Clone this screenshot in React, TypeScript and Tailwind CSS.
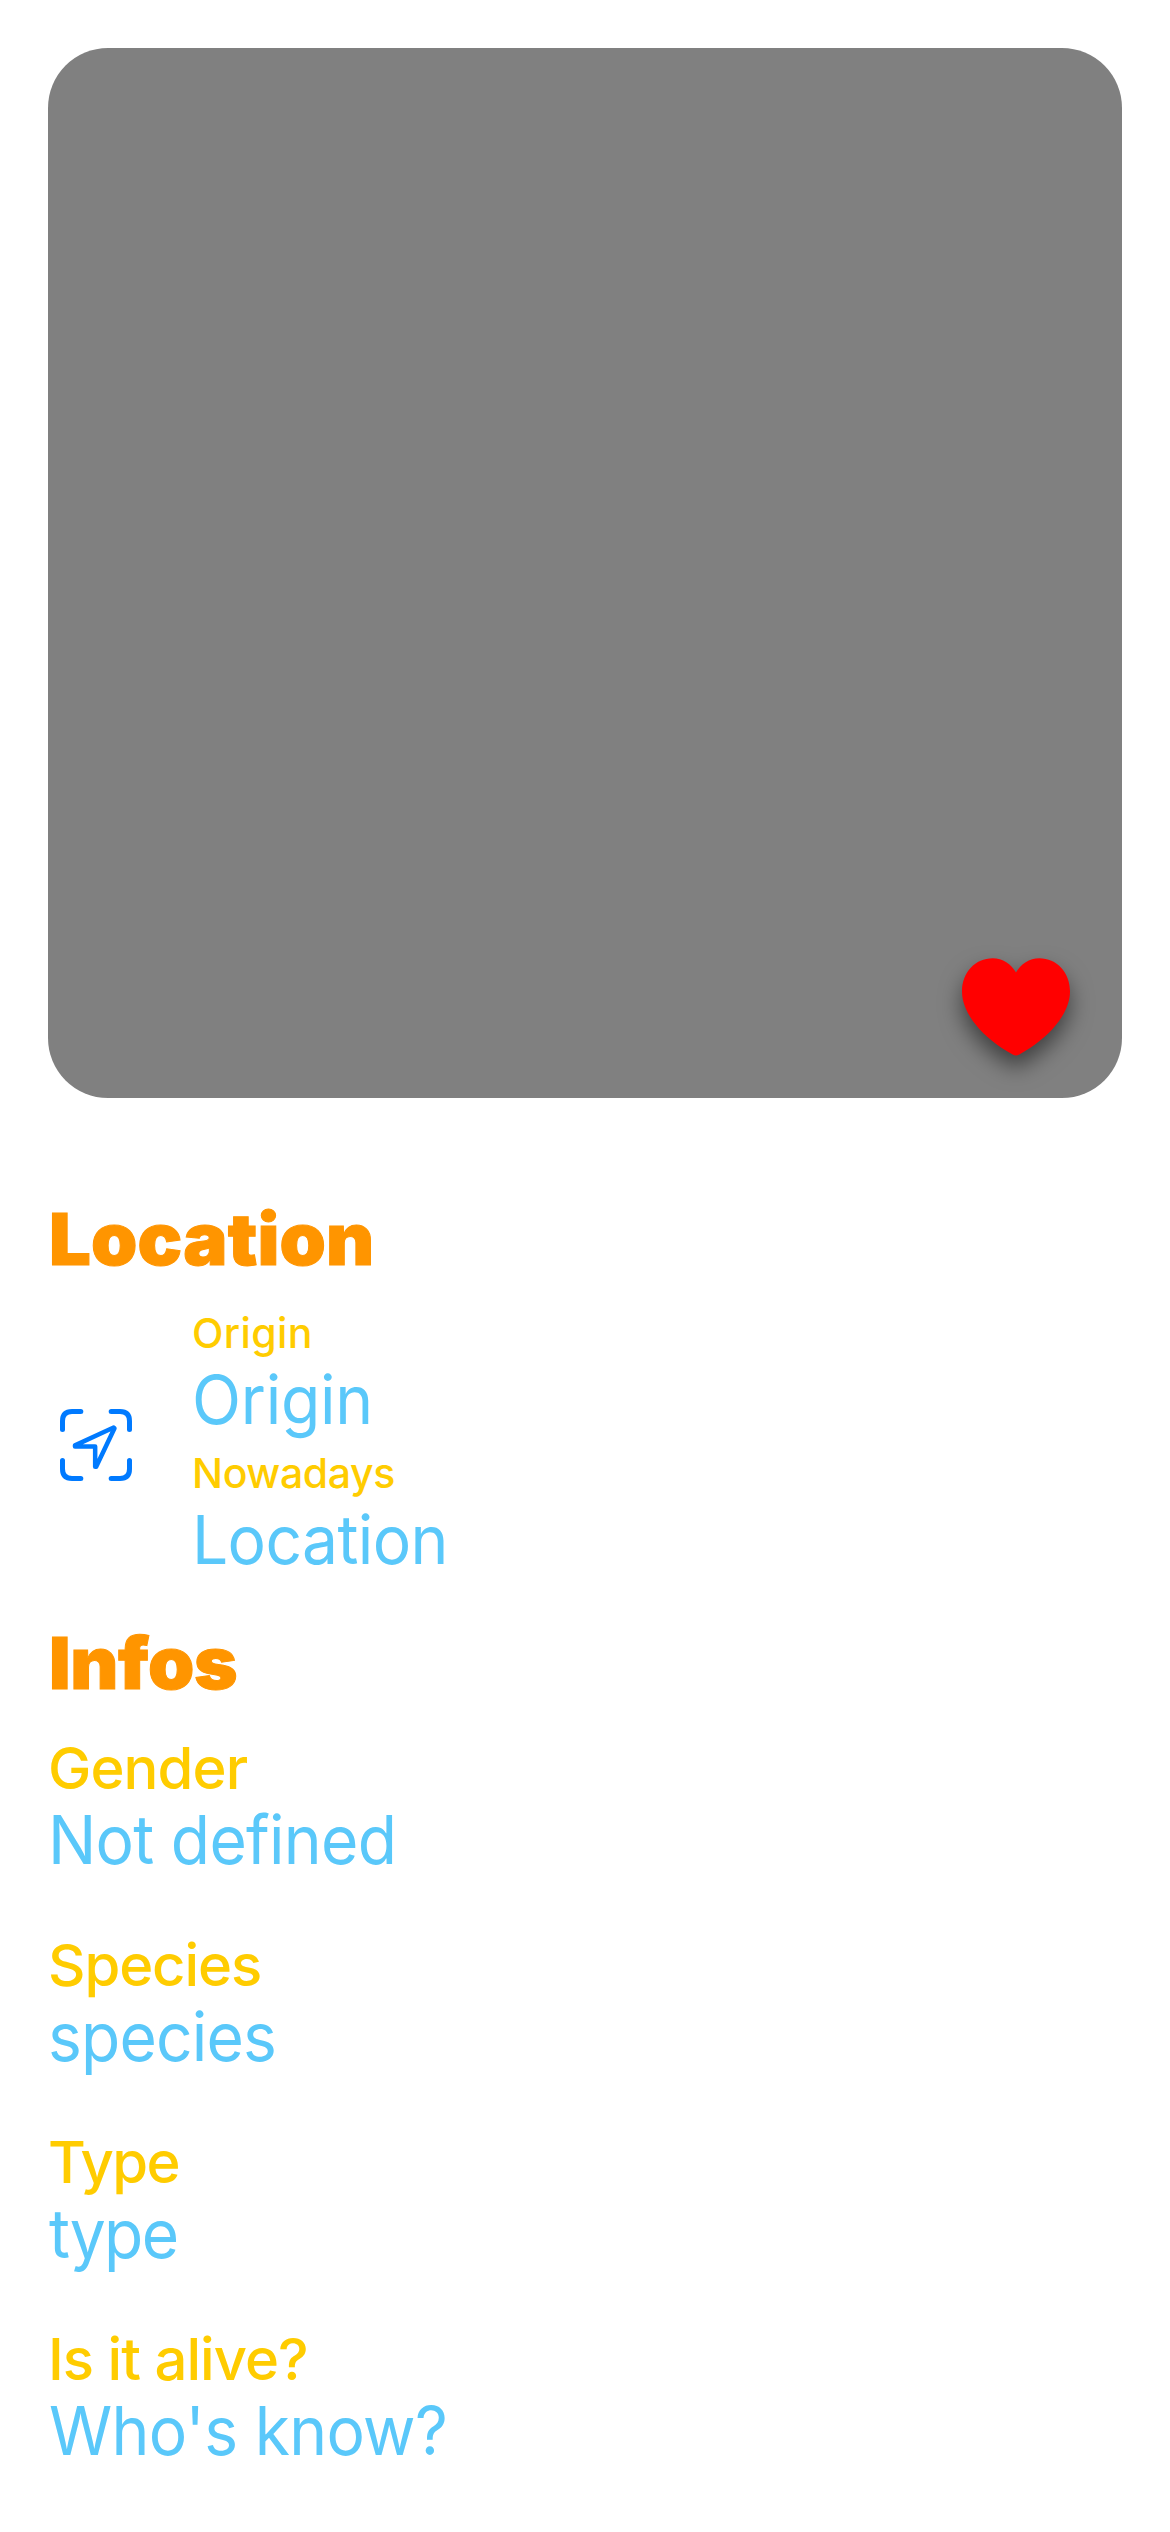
function Heart() {
  return (
    <svg
      viewBox="0 0 324 293"
      className="h-[98px] w-[108px] overflow-visible drop-shadow-[0_12px_11px_rgba(0,0,0,0.5)]"
      fill="#ff0000"
      aria-label="Favourite"
    >
      <path d="M162 43C148 17 122 0 92 0C40 0 0 42 0 100C0 166 62 240 152 289Q162 295 172 289C262 240 324 166 324 100C324 42 284 0 232 0C202 0 176 17 162 43Z" />
    </svg>
  );
}

function LocationViewfinder() {
  return (
    <svg
      viewBox="0 0 216 216"
      className="size-[72px]"
      fill="none"
      stroke="#007aff"
      strokeLinecap="round"
      strokeLinejoin="round"
    >
      <path
        strokeWidth="15"
        d="M7.5 61.5V36Q7.5 7.5 36 7.5H62.5M153.5 7.5H180Q208.5 7.5 208.5 36V61.5M208.5 154.5V180Q208.5 208.5 180 208.5H153.5M62.5 208.5H36Q7.5 208.5 7.5 180V154.5"
      />
      <path strokeWidth="13.5" d="M161 55.5L45 109V112.5H105.5V173.5H108.5L163.5 58Z" />
    </svg>
  );
}

const title =
  "ml-px origin-left scale-x-[1.03] text-[72px] leading-[86px] font-black text-[#ff9500] [-webkit-text-stroke:1px_#ff9500]";
const caption = "text-[41px] leading-[50px] font-medium text-[#ffcc00]";
const label = "text-[58px] leading-[59px] font-medium text-[#ffcc00]";
const value = "origin-left scale-x-95 text-[67.5px] leading-[84px] font-normal text-[#5ac8fa]";

const infos = [
  { name: "Gender", nameClass: "tracking-[-0.91px]", text: "Not defined", textClass: "tracking-[-0.77px]" },
  { name: "Species", nameClass: "tracking-[-1.09px]", text: "species", textClass: "tracking-[-0.87px]" },
  { name: "Type", nameClass: "tracking-[-1.68px]", text: "type", textClass: "ml-px tracking-[-1.66px]" },
  { name: "Is it alive?", nameClass: "tracking-[-0.98px]", text: "Who's know?", textClass: "ml-px tracking-[-0.7px]" },
];

export default function App() {
  return (
    <main className="flex h-[2532px] w-[1170px] flex-col overflow-hidden bg-white px-12 pt-12 font-['Inter',sans-serif] whitespace-nowrap">
      <div className="flex h-[1050px] shrink-0 items-end justify-end rounded-[60px] bg-[#808080] pr-[52px] pb-[42px]">
        <Heart />
      </div>

      <section className="mt-[98px]">
        <h2 className={`${title} tracking-[0.16px]`}>Location</h2>
        <div className="mt-[26px] flex items-center gap-12">
          <div className="flex w-24 justify-center">
            <LocationViewfinder />
          </div>
          <div className="flex flex-col gap-1.5">
            <div>
              <p className={`${caption} tracking-[0.37px]`}>Origin</p>
              <p className={`${value} tracking-[-0.26px]`}>Origin</p>
            </div>
            <div>
              <p className={`${caption} tracking-[-0.37px]`}>Nowadays</p>
              <p className={`${value} tracking-[-0.67px]`}>Location</p>
            </div>
          </div>
        </div>
      </section>

      <section className="mt-[38px]">
        <h2 className={`${title} tracking-[-0.3px]`}>Infos</h2>
        <div className="mt-[33px] flex flex-col gap-[54px]">
          {infos.map((info) => (
            <div key={info.name}>
              <p className={`${label} ${info.nameClass}`}>{info.name}</p>
              <p className={`${value} ${info.textClass}`}>{info.text}</p>
            </div>
          ))}
        </div>
      </section>
    </main>
  );
}
